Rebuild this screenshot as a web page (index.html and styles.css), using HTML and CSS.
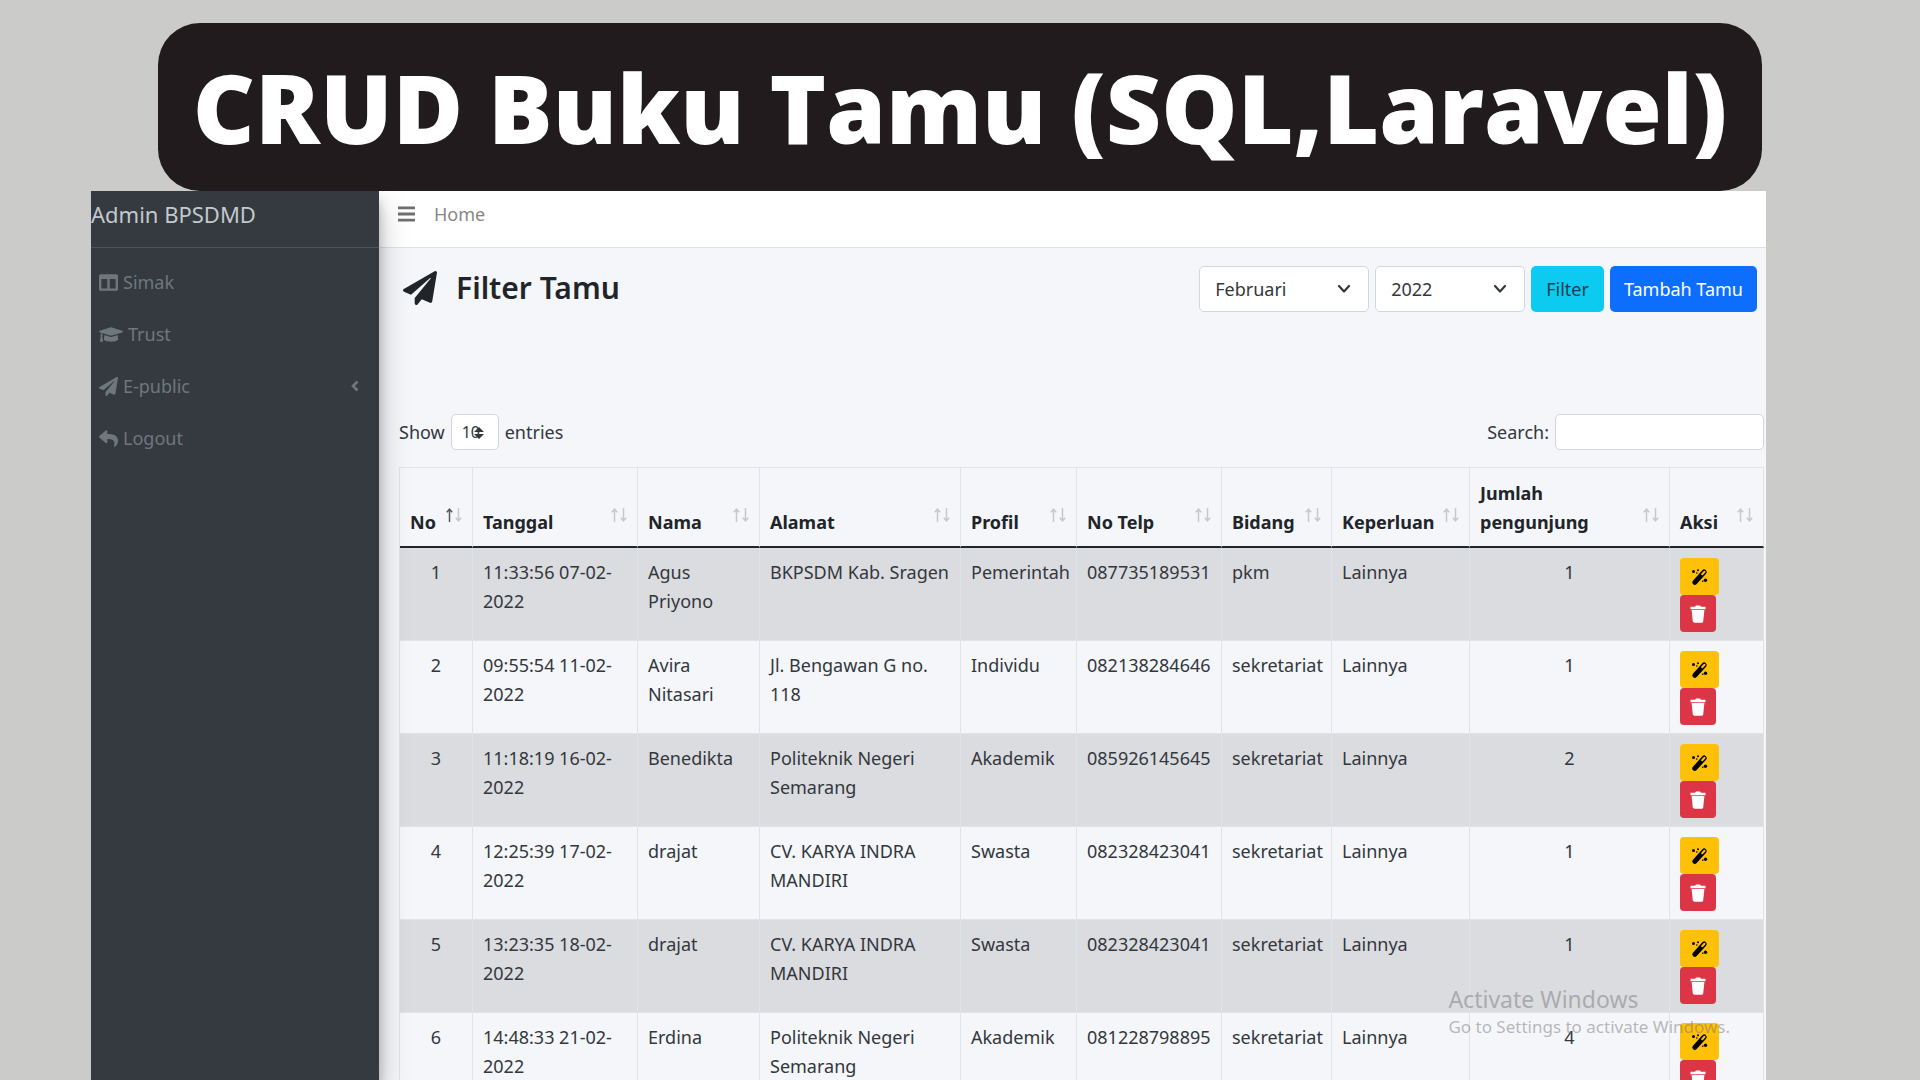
FILE: index.html
```html
<!DOCTYPE html>
<html lang="id">
<head>
<meta charset="utf-8">
<meta name="viewport" content="width=device-width, initial-scale=1">
<title>CRUD Buku Tamu (SQL,Laravel)</title>
<link rel="stylesheet" href="styles.css">
</head>
<body>
<svg class="sprite" aria-hidden="true">
  <symbol id="plane" viewBox="0 0 512 512"><path d="M476 3.2L12.5 270.6c-18.1 10.4-15.8 35.6 2.2 43.2L121 358.4l287.3-253.2c5.5-4.9 13.3 2.6 8.6 8.3L176 407v80.5c0 23.6 28.5 32.9 42.5 15.8L282 426l124.6 52.2c14.2 6 30.4-2.9 33-18.2l72-432C515 7.8 493.3-6.8 476 3.2z"/></symbol>
  <symbol id="columns" viewBox="0 0 512 512"><path d="M464 32H48C21.5 32 0 53.500 0 80v352c0 26.500 21.500 48 48 48h416c26.500 0 48-21.500 48-48V80c0-26.500-21.500-48-48-48zM224 416H64V160h160v256zm224 0H288V160h160v256z"/></symbol>
  <symbol id="cap" viewBox="0 0 640 512"><path d="M622.34 153.2L343.4 67.5c-15.2-4.67-31.6-4.67-46.79 0L17.66 153.2c-23.54 7.23-23.54 38.36 0 45.59l48.63 14.94c-10.67 13.19-17.23 29.28-17.88 46.9C38.78 266.15 32 276.11 32 288c0 10.78 5.68 19.85 13.86 25.65L20.33 428.53C18.11 438.52 25.71 448 35.94 448h56.11c10.24 0 17.84-9.48 15.62-19.47L82.14 313.65C90.32 307.85 96 298.78 96 288c0-11.57-6.47-21.25-15.66-26.87.76-15.02 8.44-28.3 20.69-36.72L296.6 284.5c9.06 2.78 26.44 6.25 46.79 0l278.95-85.7c23.55-7.24 23.55-38.36 0-45.6zM352.79 315.09c-28.53 8.76-52.84 3.92-65.59 0l-145.02-44.55L128 384c0 35.35 85.96 64 192 64s192-28.65 192-64l-14.18-113.47-145.03 44.56z"/></symbol>
  <symbol id="reply" viewBox="0 0 512 512"><path d="M8.309 189.836L184.313 37.851C199.719 24.546 224 35.347 224 56.015v80.053c160.629 1.839 288 34.032 288 186.258 0 61.441-39.581 122.309-83.333 154.132-13.653 9.931-33.111-2.533-28.077-18.631 45.344-145.012-21.507-183.51-176.59-185.742V360c0 20.7-24.3 31.453-39.687 18.164l-176.004-152c-11.071-9.562-11.086-26.753 0-36.328z"/></symbol>
  <symbol id="left" viewBox="0 0 8 12"><path d="M6.500 1.500L2 6l4.500 4.500" fill="none" stroke="currentColor" stroke-width="2.600"/></symbol>
  <symbol id="down" viewBox="0 0 14 10"><path d="M2 2l5 5.500L12 2" fill="none" stroke="currentColor" stroke-width="2.200" stroke-linecap="round" stroke-linejoin="round"/></symbol>
  <symbol id="updown" viewBox="0 0 10 12"><path d="M5 0l5 5H0zM5 12L0 7h10z"/></symbol>
  <symbol id="bars" viewBox="0 0 17 16"><path d="M0 .5h17v2.800H0zM0 6.600h17v2.800H0zM0 12.700h17v2.800H0z"/></symbol>
  <symbol id="sort" viewBox="0 0 16 14"><g fill="none" stroke-width="1.500"><path class="sort-up" d="M3.500 14V1.500M0.800 4.200L3.500 1.200l2.700 3"/><path class="sort-down" d="M12.500 0v12.500M9.800 9.800l2.700 3 2.700-3"/></g></symbol>
  <symbol id="wand" viewBox="0 0 18 18"><path d="M3.800 14.400L13.200 4" stroke="currentColor" stroke-width="5" stroke-linecap="round"/><path d="M11.200 6.300l2.300-2.500" stroke="#ffc107" stroke-width="2" stroke-linecap="round"/><circle cx="2.500" cy="3.500" r="1.500"/><circle cx="7" cy="2.300" r="1"/><circle cx="5.800" cy="5" r=".8"/><circle cx="14.500" cy="12.300" r="1.700"/><circle cx="11.700" cy="13.300" r=".8"/></symbol>
  <symbol id="trash" viewBox="0 0 16 18"><path d="M0.500 1.800h4.500L6 .5h4l1 1.300h4.500v2.400H.5zM1.600 5h12.800l-1.200 11.500c-.1.800-.6 1.200-1.400 1.200H4.200c-.8 0-1.300-.4-1.400-1.200z"/></symbol>
</svg>

<div class="page">
  <h1 class="banner">CRUD Buku Tamu (SQL,Laravel)</h1>

  <div class="app">
    <aside class="sidebar">
      <a class="brand" href="#">Admin BPSDMD</a>
      <nav class="menu">
        <a href="#"><svg class="icon"><use href="#columns"/></svg>Simak</a>
        <a href="#"><svg class="icon icon-wide"><use href="#cap"/></svg>Trust</a>
        <a href="#"><svg class="icon"><use href="#plane"/></svg>E-public<svg class="caret"><use href="#left"/></svg></a>
        <a href="#"><svg class="icon"><use href="#reply"/></svg>Logout</a>
      </nav>
    </aside>

    <main class="main">
      <header class="topbar">
        <button class="toggle" type="button" aria-label="Menu"><svg><use href="#bars"/></svg></button>
        <a href="#">Home</a>
      </header>

      <div class="content">
        <div class="heading">
          <h2><svg><use href="#plane"/></svg>Filter Tamu</h2>
          <form class="filters">
            <span class="select month"><select aria-label="Bulan"><option>Februari</option></select><svg><use href="#down"/></svg></span>
            <span class="select year"><select aria-label="Tahun"><option>2022</option></select><svg><use href="#down"/></svg></span>
            <button class="btn btn-info" type="button">Filter</button>
            <button class="btn btn-primary" type="button">Tambah Tamu</button>
          </form>
        </div>

        <div class="controls">
          <label>Show <span class="select length"><select><option>10</option></select><svg><use href="#updown"/></svg></span> entries</label>
          <label>Search: <input type="search"></label>
        </div>

        <table class="guests">
          <colgroup>
            <col class="c-no"><col class="c-date"><col class="c-name"><col class="c-address"><col class="c-profile"><col class="c-phone"><col class="c-field"><col class="c-need"><col class="c-count"><col class="c-action">
          </colgroup>
          <thead>
            <tr>
              <th class="sorted"><div>No<svg><use href="#sort"/></svg></div></th>
              <th><div>Tanggal<svg><use href="#sort"/></svg></div></th>
              <th><div>Nama<svg><use href="#sort"/></svg></div></th>
              <th><div>Alamat<svg><use href="#sort"/></svg></div></th>
              <th><div>Profil<svg><use href="#sort"/></svg></div></th>
              <th><div>No Telp<svg><use href="#sort"/></svg></div></th>
              <th><div>Bidang<svg><use href="#sort"/></svg></div></th>
              <th><div>Keperluan<svg><use href="#sort"/></svg></div></th>
              <th><div>Jumlah<br>pengunjung<svg><use href="#sort"/></svg></div></th>
              <th><div>Aksi<svg><use href="#sort"/></svg></div></th>
            </tr>
          </thead>
          <tbody>
            <tr><td class="num">1</td><td>11:33:56 07-02-2022</td><td>Agus Priyono</td><td>BKPSDM Kab. Sragen</td><td>Pemerintah</td><td>087735189531</td><td>pkm</td><td>Lainnya</td><td class="num">1</td><td><div class="actions"><button class="edit" type="button" aria-label="Ubah"><svg><use href="#wand"/></svg></button><button class="delete" type="button" aria-label="Hapus"><svg><use href="#trash"/></svg></button></div></td></tr>
            <tr><td class="num">2</td><td>09:55:54 11-02-2022</td><td>Avira Nitasari</td><td>Jl. Bengawan G no. 118</td><td>Individu</td><td>082138284646</td><td>sekretariat</td><td>Lainnya</td><td class="num">1</td><td><div class="actions"><button class="edit" type="button" aria-label="Ubah"><svg><use href="#wand"/></svg></button><button class="delete" type="button" aria-label="Hapus"><svg><use href="#trash"/></svg></button></div></td></tr>
            <tr><td class="num">3</td><td>11:18:19 16-02-2022</td><td>Benedikta</td><td>Politeknik Negeri Semarang</td><td>Akademik</td><td>085926145645</td><td>sekretariat</td><td>Lainnya</td><td class="num">2</td><td><div class="actions"><button class="edit" type="button" aria-label="Ubah"><svg><use href="#wand"/></svg></button><button class="delete" type="button" aria-label="Hapus"><svg><use href="#trash"/></svg></button></div></td></tr>
            <tr><td class="num">4</td><td>12:25:39 17-02-2022</td><td>drajat</td><td>CV. KARYA INDRA MANDIRI</td><td>Swasta</td><td>082328423041</td><td>sekretariat</td><td>Lainnya</td><td class="num">1</td><td><div class="actions"><button class="edit" type="button" aria-label="Ubah"><svg><use href="#wand"/></svg></button><button class="delete" type="button" aria-label="Hapus"><svg><use href="#trash"/></svg></button></div></td></tr>
            <tr><td class="num">5</td><td>13:23:35 18-02-2022</td><td>drajat</td><td>CV. KARYA INDRA MANDIRI</td><td>Swasta</td><td>082328423041</td><td>sekretariat</td><td>Lainnya</td><td class="num">1</td><td><div class="actions"><button class="edit" type="button" aria-label="Ubah"><svg><use href="#wand"/></svg></button><button class="delete" type="button" aria-label="Hapus"><svg><use href="#trash"/></svg></button></div></td></tr>
            <tr><td class="num">6</td><td>14:48:33 21-02-2022</td><td>Erdina</td><td>Politeknik Negeri Semarang</td><td>Akademik</td><td>081228798895</td><td>sekretariat</td><td>Lainnya</td><td class="num">4</td><td><div class="actions"><button class="edit" type="button" aria-label="Ubah"><svg><use href="#wand"/></svg></button><button class="delete" type="button" aria-label="Hapus"><svg><use href="#trash"/></svg></button></div></td></tr>
          </tbody>
        </table>
      </div>
    </main>

    <div class="watermark"><strong>Activate Windows</strong><span>Go to Settings to activate Windows.</span></div>
  </div>
</div>
</body>
</html>
```
FILE: styles.css
```css
* { box-sizing: border-box; }

body {
  margin: 0;
  background: #cbccc9;
  color: #33383d;
  font: 18px/29px "Noto Sans", "Open Sans", sans-serif;
}

a { color: inherit; text-decoration: none; }
button, input, select { font: inherit; color: inherit; margin: 0; }
svg { display: block; flex: none; fill: currentColor; }
.sprite { position: absolute; width: 0; height: 0; }

.page {
  display: flex;
  flex-direction: column;
  height: 100vh;
  padding: 23px 154px 0 91px;
  overflow: hidden;
}

.banner {
  flex: none;
  margin: 0 4px 0 67px;
  height: 168px;
  border-radius: 42px;
  background: #211b1d;
  color: #fff;
  font: 800 96px/168px "Open Sans", sans-serif;
  text-align: center;
  white-space: nowrap;
}

.app {
  position: relative;
  display: flex;
  flex: 1;
  min-height: 0;
  overflow: hidden;
  background: #f4f6f9;
}

/* Sidebar */
.sidebar {
  position: relative;
  z-index: 1;
  flex: none;
  width: 288px;
  background: #343a40;
  box-shadow: 0 14px 28px rgba(0, 0, 0, .25), 0 10px 10px rgba(0, 0, 0, .22);
  color: #6f777e;
}
.brand {
  display: block;
  height: 57px;
  padding-top: 9px;
  border-bottom: 1px solid #4b545c;
  color: #c3c8cd;
  font-size: 22px;
}
.menu { padding: 8px; }
.menu a {
  display: flex;
  align-items: center;
  gap: 5px;
  height: 52px;
}
.icon { width: 19px; height: 19px; }
.icon-wide { width: 24px; }
.caret { width: 8px; height: 12px; margin: 0 12px 0 auto; }

/* Main column */
.main { flex: 1; min-width: 0; }
.topbar {
  display: flex;
  align-items: center;
  gap: 19px;
  height: 57px;
  padding: 0 19px 10px;
  border-bottom: 1px solid #dee2e6;
  background: #fff;
  color: #868686;
}
.toggle { padding: 0; border: 0; background: none; color: #6f6f6f; }
.toggle svg { width: 17px; height: 16px; }

.content { padding: 18px 2px 0 20px; }
.heading {
  display: flex;
  justify-content: space-between;
  align-items: flex-start;
  height: 148px;
  padding-right: 7px;
}
.heading h2 {
  display: flex;
  align-items: center;
  gap: 19px;
  margin: 0;
  padding-left: 4px;
  color: #212529;
  font-size: 30px;
  font-weight: 600;
  line-height: 44px;
}
.heading h2 svg { width: 34px; height: 34px; }
.filters { display: flex; gap: 6px; }

.select { position: relative; display: inline-block; }
.select select, .controls input {
  display: block;
  width: 100%;
  border: 1px solid #d3d7dc;
  border-radius: 5px;
  background: #fff;
  appearance: none;
}
.select select { height: 46px; padding: 0 15px; }
.select svg {
  position: absolute;
  top: 18px;
  right: 18px;
  width: 14px;
  height: 10px;
  pointer-events: none;
}
.month { width: 170px; }
.year { width: 150px; }

.btn { height: 46px; padding: 0 15px; border: 0; border-radius: 5px; }
.btn-info { background: #0dcaf0; color: #12404b; }
.btn-primary { padding: 0 14px; background: #0d6efd; color: #fff; }

.controls {
  display: flex;
  justify-content: space-between;
  height: 53px;
}
.controls label { display: flex; align-items: center; gap: 6px; height: 36px; }
.length { width: 48px; }
.length select { height: 36px; padding: 0 10px; font-size: 16px; }
.length svg { top: 13px; right: 15px; width: 10px; height: 12px; }
.controls input { width: 209px; height: 36px; }

/* Guest table */
.guests {
  width: 100%;
  table-layout: fixed;
  border-collapse: separate;
  border-spacing: 0;
  border-left: 1px solid #e0e3e7;
}
.c-no { width: 73px; }
.c-date { width: 165px; }
.c-name { width: 122px; }
.c-address { width: 201px; }
.c-profile { width: 116px; }
.c-phone { width: 145px; }
.c-field { width: 110px; }
.c-need { width: 138px; }
.c-count { width: 200px; }
.c-action { width: 94px; }

.guests th, .guests td {
  padding: 10px 10px 8px;
  border-right: 1px solid #e0e3e7;
  text-align: left;
  vertical-align: top;
}
.guests th {
  padding: 11px 10px 9px;
  border-top: 1px solid #e0e3e7;
  border-bottom: 2px solid #212529;
  color: #212529;
  vertical-align: bottom;
}
.guests th div { display: flex; justify-content: space-between; align-items: flex-end; }
.guests th svg { --up: #c6c8cc; width: 16px; height: 14px; margin-bottom: 15px; }
.guests .sorted svg { --up: #55585e; }
.guests td { border-bottom: 1px solid #e0e3e7; }
.guests .num { text-align: center; }
.guests tbody tr:nth-child(odd) { background: #dbdce0; }
.sort-up { stroke: var(--up); }
.sort-down { stroke: #c6c8cc; }

.actions { display: flex; flex-direction: column; align-items: flex-start; }
.actions button {
  display: flex;
  align-items: center;
  justify-content: center;
  width: 36px;
  height: 37px;
  padding: 0;
  border: 0;
  border-radius: 4px;
}
.actions svg { width: 16px; height: 18px; }
.actions .edit { width: 39px; background: #ffc107; color: #000; }
.actions .edit svg { width: 18px; }
.actions .delete { background: #dc3545; color: #fff; }

/* System notice floating over the window corner */
.watermark {
  position: absolute;
  right: 36px;
  bottom: 40px;
  z-index: 2;
  color: rgba(120, 120, 120, .5);
  line-height: 27px;
  pointer-events: none;
}
.watermark strong, .watermark span { display: block; font-weight: 400; }
.watermark strong { font-size: 23px; }
.watermark span { font-size: 17px; }
```
